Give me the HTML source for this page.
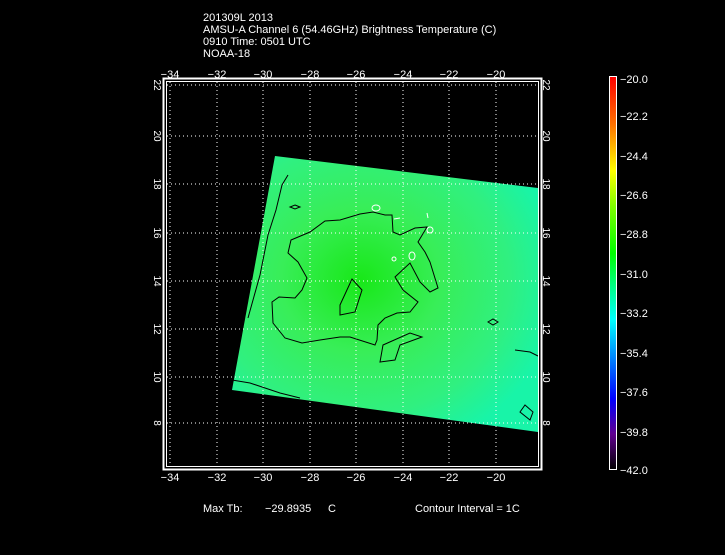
<!DOCTYPE html>
<html><head><style>
body{margin:0;background:#000;width:725px;height:550px;overflow:hidden;font-family:"Liberation Mono","DejaVu Sans Mono",monospace;}
svg text{font-family:"Liberation Sans",sans-serif;fill:#fff;font-size:11px;}
</style></head><body>
<svg width="725" height="550" viewBox="0 0 725 550">
<defs>
<radialGradient id="g" cx="0.42" cy="0.45" r="0.65">
<stop offset="0" stop-color="#18e818"/>
<stop offset="0.4" stop-color="#38ee58"/>
<stop offset="0.75" stop-color="#30f080"/>
<stop offset="1" stop-color="#18f4a8"/>
</radialGradient>
<linearGradient id="cb" x1="0" y1="0" x2="0" y2="1">
<stop offset="0" stop-color="#ff0000"/>
<stop offset="0.12" stop-color="#ff7000"/>
<stop offset="0.24" stop-color="#ffff00"/>
<stop offset="0.33" stop-color="#80ff00"/>
<stop offset="0.45" stop-color="#00ff00"/>
<stop offset="0.53" stop-color="#00ff80"/>
<stop offset="0.62" stop-color="#00ffff"/>
<stop offset="0.72" stop-color="#0080ff"/>
<stop offset="0.82" stop-color="#0000ff"/>
<stop offset="0.91" stop-color="#600090"/>
<stop offset="1" stop-color="#000000"/>
</linearGradient>
</defs>
<text x="203" y="21">201309L 2013</text>
<text x="203" y="33">AMSU-A Channel 6 (54.46GHz) Brightness Temperature (C)</text>
<text x="203" y="45">0910 Time: 0501 UTC</text>
<text x="203" y="57">NOAA-18</text>
<polygon points="275,156 538,188 538,432 232,390" fill="url(#g)"/>
<g stroke="#fff" stroke-width="1" stroke-dasharray="1,3" fill="none">
<line x1="170" y1="82" x2="170" y2="466"/><line x1="217" y1="82" x2="217" y2="466"/>
<line x1="263" y1="82" x2="263" y2="466"/><line x1="310" y1="82" x2="310" y2="466"/>
<line x1="356" y1="82" x2="356" y2="466"/><line x1="403" y1="82" x2="403" y2="466"/>
<line x1="449" y1="82" x2="449" y2="466"/><line x1="496" y1="82" x2="496" y2="466"/>
<line x1="167" y1="85" x2="538" y2="85"/><line x1="167" y1="136" x2="538" y2="136"/>
<line x1="167" y1="184" x2="538" y2="184"/><line x1="167" y1="233" x2="538" y2="233"/>
<line x1="167" y1="281" x2="538" y2="281"/><line x1="167" y1="329" x2="538" y2="329"/>
<line x1="167" y1="377" x2="538" y2="377"/><line x1="167" y1="423" x2="538" y2="423"/>
</g>
<g stroke="#000" stroke-width="1" fill="none">
<path d="M272,302 L279,297 295,298 302,290 307,278 298,262 288,253 291,240 310,232 325,221 340,220 360,214 373,212 385,215 392,215 393,232 400,235 415,228 427,227 418,242 425,252 430,262 438,288 430,292 420,282 410,263 395,277 403,290 418,302 410,312 397,313 385,318 378,325 377,340 375,345 350,337 340,337 320,340 302,343 285,338 273,323 272,302Z"/>
<path d="M340,305 L352,279 362,290 355,312 340,315 Z"/>
<path d="M232,380 L250,383 280,393 300,398"/>
<path d="M288,175 L282,185 276,210 268,235 260,275 248,318"/>
<path d="M383,345 L410,333 422,337 400,345 395,360 380,362 Z"/>
<path d="M530,420 L520,412 525,405 533,412 Z"/>
<path d="M515,350 L530,352 538,356"/>
<path d="M488,322 L493,325 498,322 493,319 Z"/>
<path d="M295,205 L300,207 295,209 290,207 Z"/>
</g>
<g stroke="#fff" stroke-width="1" fill="none">
<ellipse cx="376" cy="208" rx="4" ry="3"/><ellipse cx="430" cy="230" rx="3" ry="3"/>
<ellipse cx="412" cy="256" rx="3" ry="4"/><ellipse cx="394" cy="259" rx="2" ry="2"/>
<path d="M394,219 L400,218"/><path d="M427,213 L428,218"/>
</g>
<rect x="163.5" y="78.5" width="378" height="391" fill="none" stroke="#fff" stroke-width="2"/>
<rect x="166.5" y="81.5" width="372" height="385" fill="none" stroke="#fff" stroke-width="1"/>
<g text-anchor="middle">
<text x="170" y="78">−34</text><text x="217" y="78">−32</text><text x="263" y="78">−30</text>
<text x="310" y="78">−28</text><text x="356" y="78">−26</text><text x="403" y="78">−24</text>
<text x="449" y="78">−22</text><text x="496" y="78">−20</text>
<text x="170" y="481">−34</text><text x="217" y="481">−32</text><text x="263" y="481">−30</text>
<text x="310" y="481">−28</text><text x="356" y="481">−26</text><text x="403" y="481">−24</text>
<text x="449" y="481">−22</text><text x="496" y="481">−20</text>
</g>
<g>
<text transform="translate(154,85) rotate(90)" text-anchor="middle" style="font-size:10px">22</text>
<text transform="translate(154,136) rotate(90)" text-anchor="middle" style="font-size:10px">20</text>
<text transform="translate(154,184) rotate(90)" text-anchor="middle" style="font-size:10px">18</text>
<text transform="translate(154,233) rotate(90)" text-anchor="middle" style="font-size:10px">16</text>
<text transform="translate(154,281) rotate(90)" text-anchor="middle" style="font-size:10px">14</text>
<text transform="translate(154,329) rotate(90)" text-anchor="middle" style="font-size:10px">12</text>
<text transform="translate(154,377) rotate(90)" text-anchor="middle" style="font-size:10px">10</text>
<text transform="translate(154,423) rotate(90)" text-anchor="middle" style="font-size:10px">8</text>
<text transform="translate(543,85) rotate(90)" text-anchor="middle" style="font-size:10px">22</text>
<text transform="translate(543,136) rotate(90)" text-anchor="middle" style="font-size:10px">20</text>
<text transform="translate(543,184) rotate(90)" text-anchor="middle" style="font-size:10px">18</text>
<text transform="translate(543,233) rotate(90)" text-anchor="middle" style="font-size:10px">16</text>
<text transform="translate(543,281) rotate(90)" text-anchor="middle" style="font-size:10px">14</text>
<text transform="translate(543,329) rotate(90)" text-anchor="middle" style="font-size:10px">12</text>
<text transform="translate(543,377) rotate(90)" text-anchor="middle" style="font-size:10px">10</text>
<text transform="translate(543,423) rotate(90)" text-anchor="middle" style="font-size:10px">8</text>
</g>
<rect x="609.5" y="76.5" width="7" height="393" fill="url(#cb)" stroke="#fff" stroke-width="1"/>
<g>
<text x="620" y="83">−20.0</text><text x="620" y="120">−22.2</text><text x="620" y="160">−24.4</text>
<text x="620" y="199">−26.6</text><text x="620" y="238">−28.8</text><text x="620" y="278">−31.0</text>
<text x="620" y="317">−33.2</text><text x="620" y="357">−35.4</text><text x="620" y="396">−37.6</text>
<text x="620" y="436">−39.8</text><text x="620" y="474">−42.0</text>
</g>
<text x="203" y="512">Max Tb:</text>
<text x="265" y="512">−29.8935</text>
<text x="328" y="512">C</text>
<text x="415" y="512">Contour Interval = 1C</text>
</svg>
</body></html>
